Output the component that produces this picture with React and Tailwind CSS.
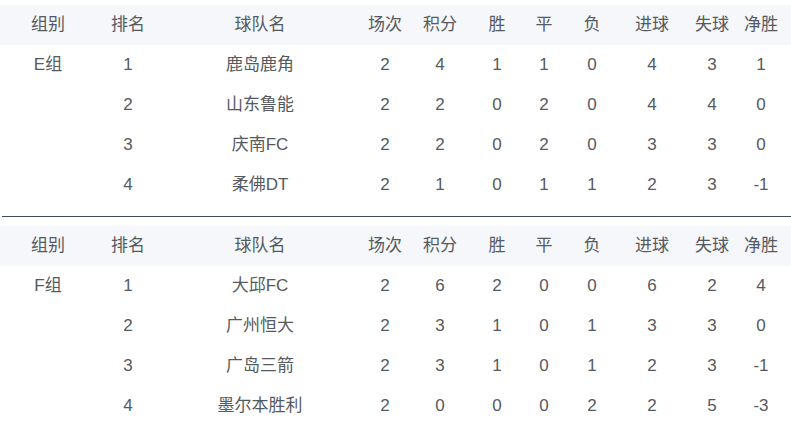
import React from "react";

const cols = "grid grid-cols-[96px_64px_200px_50px_60px_54px_40px_56px_64px_56px_42px]";
const heads = ["组别", "排名", "球队名", "场次", "积分", "胜", "平", "负", "进球", "失球", "净胜"];

const groups = [
  {
    name: "E组",
    rows: [
      ["1", "鹿岛鹿角", 2, 4, 1, 1, 0, 4, 3, 1],
      ["2", "山东鲁能", 2, 2, 0, 2, 0, 4, 4, 0],
      ["3", "庆南FC", 2, 2, 0, 2, 0, 3, 3, 0],
      ["4", "柔佛DT", 2, 1, 0, 1, 1, 2, 3, -1],
    ],
  },
  {
    name: "F组",
    rows: [
      ["1", "大邱FC", 2, 6, 2, 0, 0, 6, 2, 4],
      ["2", "广州恒大", 2, 3, 1, 0, 1, 3, 3, 0],
      ["3", "广岛三箭", 2, 3, 1, 0, 1, 2, 3, -1],
      ["4", "墨尔本胜利", 2, 0, 0, 0, 2, 2, 5, -3],
    ],
  },
];

const GroupTable = ({ group }) => (
  <div>
    <div className={`${cols} h-10 items-center bg-[#f5f7fa]`}>
      {heads.map((h) => (
        <div key={h} className="text-center">{h}</div>
      ))}
    </div>
    {group.rows.map((r, i) => (
      <div key={r[0]} className={`${cols} h-10 items-center`}>
        <div className="text-center">{i === 0 ? group.name : ""}</div>
        {r.map((v, j) => (
          <div key={j} className="text-center">{v}</div>
        ))}
      </div>
    ))}
  </div>
);

export default function App() {
  return (
    <div className="w-[791px] h-[438px] bg-white pt-[5px] text-[17px] text-[#555a60] font-['Liberation_Sans','Noto_Sans_CJK_SC',sans-serif]">
      <GroupTable group={groups[0]} />
      <div className="mt-[11px] ml-[2px] h-px bg-[#3f4b5b]" />
      <div className="pt-[9px]">
        <GroupTable group={groups[1]} />
      </div>
    </div>
  );
}
